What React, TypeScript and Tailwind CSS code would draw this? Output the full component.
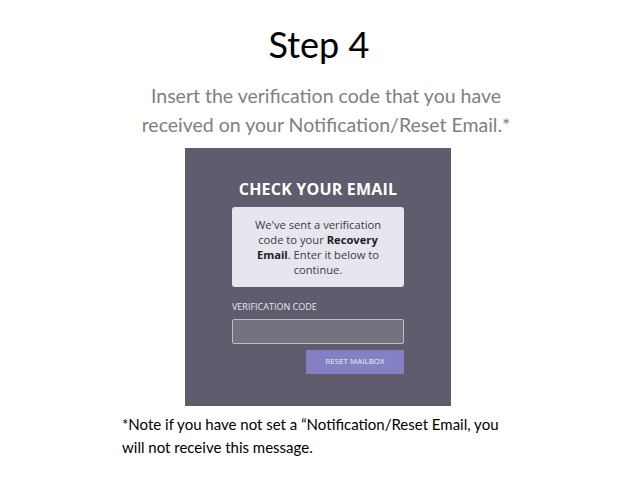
export default function App() {
  return (
    <div className="w-[638px] h-[479px] bg-white flex flex-col items-center overflow-hidden" style={{ fontFamily: "Lato, 'Liberation Sans', sans-serif" }}>
      <h1 className="mt-[22px] text-[36px] leading-[44px] text-black">Step 4</h1>
      <p className="mt-[15px] ml-[14px] text-center text-[19.5px] leading-[29px] text-[#7f7f7f]">
        Insert the verification code that you have
        <br />
        received on your Notification/Reset Email.*
      </p>

      {/* screenshot of the recovery form */}
      <div
        className="mt-[9px] w-[266px] h-[258px] bg-[#5e5c6d] flex flex-col items-center pt-[30px] ml-[-2px]"
        style={{ fontFamily: "'Open Sans', sans-serif" }}
      >
        <div className="text-white font-bold text-[16px] leading-[22px] tracking-[0.2px]">CHECK YOUR EMAIL</div>
        <div className="mt-[7px] w-[172px] h-[80px] bg-[#e6e6ef] rounded-[3px] flex items-center justify-center">
          <p className="text-center text-[11.2px] leading-[15px] text-[#3a3a44]">
            We've sent a verification
            <br />
            code to your <b className="text-[#222]">Recovery</b>
            <br />
            <b className="text-[#222]">Email</b>. Enter it below to
            <br />
            continue.
          </p>
        </div>
        <div className="mt-[14px] w-[172px]">
          <div className="text-[9px] leading-[12px] text-[#e8e8ee]">VERIFICATION CODE</div>
          <div className="mt-[6px] h-[25px] bg-[#73727f] border border-[#bdbcc6] rounded-[2px]" />
          <div className="mt-[6px] flex justify-end">
            <div className="w-[98px] h-[24px] bg-[#8381c4] flex items-center justify-center text-[7.8px] text-[#f0f0fa] tracking-[0.1px]">
              RESET MAILBOX
            </div>
          </div>
        </div>
      </div>

      <p className="mt-[7px] self-start ml-[122px] text-[15px] leading-[23px] text-black">
        *Note if you have not set a “Notification/Reset Email, you
        <br />
        will not receive this message.
      </p>
    </div>
  );
}
